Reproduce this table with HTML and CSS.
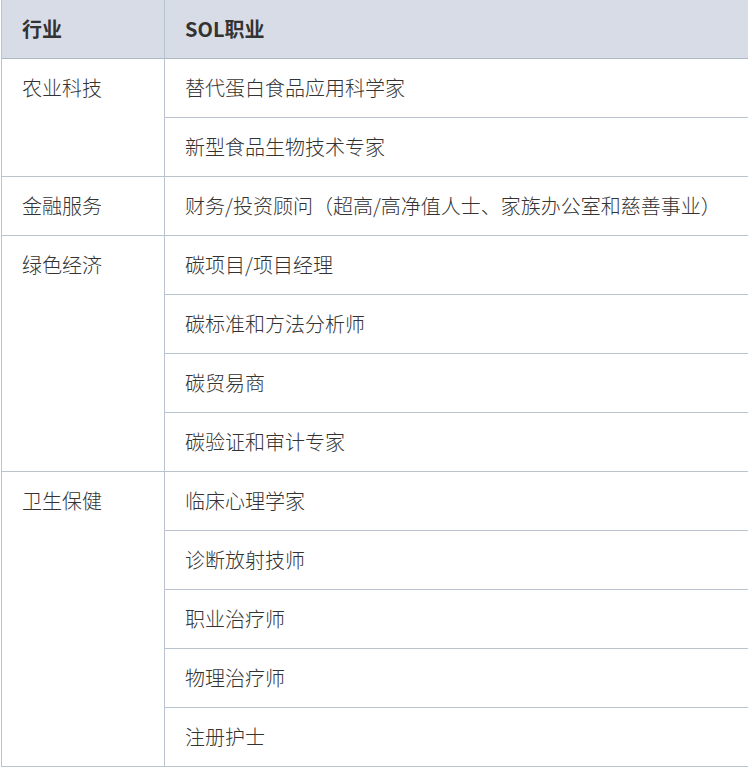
FILE: index.html
```html
<!DOCTYPE html>
<html lang="zh-CN">
<head>
<meta charset="utf-8">
<link rel="stylesheet" href="styles.css">
</head>
<body>
<div class="wrap">
<table class="jobs">
  <thead>
    <tr><th class="c1">行业</th><th class="c2">SOL职业</th></tr>
  </thead>
  <tbody>
    <tr><td class="c1" rowspan="2">农业科技</td><td class="c2">替代蛋白食品应用科学家</td></tr>
    <tr><td class="c2">新型食品生物技术专家</td></tr>
    <tr><td class="c1">金融服务</td><td class="c2">财务/投资顾问（超高/高净值人士、家族办公室和慈善事业）</td></tr>
    <tr><td class="c1" rowspan="4">绿色经济</td><td class="c2">碳项目/项目经理</td></tr>
    <tr><td class="c2">碳标准和方法分析师</td></tr>
    <tr><td class="c2">碳贸易商</td></tr>
    <tr><td class="c2">碳验证和审计专家</td></tr>
    <tr><td class="c1" rowspan="5">卫生保健</td><td class="c2">临床心理学家</td></tr>
    <tr><td class="c2">诊断放射技师</td></tr>
    <tr><td class="c2">职业治疗师</td></tr>
    <tr><td class="c2">物理治疗师</td></tr>
    <tr><td class="c2">注册护士</td></tr>
  </tbody>
</table>
</div>
</body>
</html>
```
FILE: styles.css
```css
html, body {
  margin: 0;
  padding: 0;
  background: #ffffff;
}
.wrap {
  width: 748px;
  overflow: hidden;
  padding-left: 1px;
  box-sizing: border-box;
}
.jobs {
  border-collapse: separate;
  border-spacing: 0;
  table-layout: fixed;
  width: 800px;
  border-left: 1px solid #b9c4cf;
  font-family: "Noto Sans CJK SC", "Noto Sans", sans-serif;
  font-size: 20px;
  font-weight: 300;
  color: #333333;
}
.jobs th, .jobs td {
  box-sizing: border-box;
  text-align: left;
  padding: 0 20px;
  line-height: 24px;
  white-space: nowrap;
}
.jobs th {
  height: 59px;
  background: #d8dce6;
  font-weight: 700;
  border-bottom: 1px solid #aeb8c4;
}
.jobs th.c1 {
  border-right: 1px solid #b9c4cf;
}
.jobs .c1 {
  width: 163px;
}
.jobs td {
  height: 59px;
  border-bottom: 1px solid #b9c4cf;
}
.jobs td.c1 {
  vertical-align: top;
  padding-top: 17px;
  border-right: 1px solid #b9c4cf;
}
.jobs td.c2 {
  vertical-align: middle;
}
```
